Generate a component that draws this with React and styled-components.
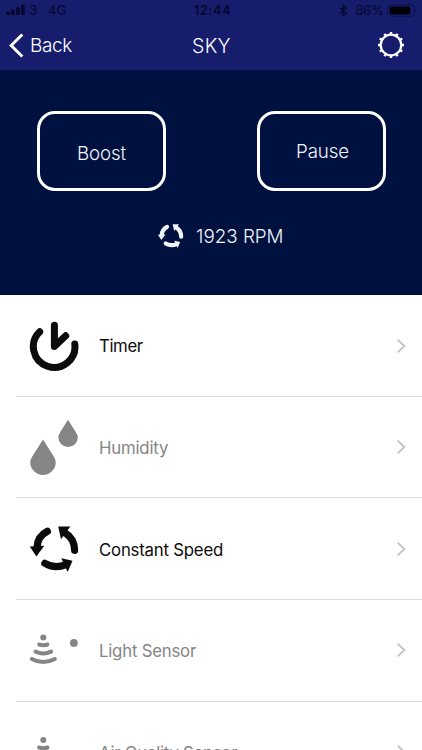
import styled, { createGlobalStyle } from "styled-components";

const GlobalStyle = createGlobalStyle`
  * {
    box-sizing: border-box;
  }
  body {
    margin: 0;
    overflow: hidden;
    background: #fff;
    font-family: Inter, "Liberation Sans", sans-serif;
  }
  svg {
    display: block;
    flex-shrink: 0;
  }
`;

const StyledApp = styled.div`
  width: 422px;
  height: 750px;
  overflow: hidden;
  background: #fff;
`;

const StyledHeader = styled.header`
  height: 70px;
  background: #161d6d;
`;

const StatusBar = styled.div`
  display: grid;
  grid-template-columns: 1fr auto 1fr;
  align-items: center;
  height: 20px;
  padding: 0 5px 0 6px;
  color: #05082e;
  font-size: 13px;
  line-height: 20px;

  .status__side {
    display: flex;
    align-items: center;
  }
  .status__side--right {
    justify-content: flex-end;
  }
  .status__carrier {
    margin: 0 11px 0 4px;
  }
  .status__time {
    padding-left: 2px;
    font-weight: 600;
    letter-spacing: 0.45px;
  }
  .status__percent {
    margin: 0 3px 0 7px;
    letter-spacing: -0.1px;
  }
`;

const NavBar = styled.nav`
  display: grid;
  grid-template-columns: 1fr auto 1fr;
  align-items: center;
  height: 50px;
  padding: 0 17px 0 9px;
  color: #fff;

  h1 {
    margin: 0 0 0 9px;
    padding-top: 1px;
    font-size: 19.5px;
    font-weight: 300;
    letter-spacing: 0.3px;
  }
`;

const NavButton = styled.button`
  display: flex;
  align-items: center;
  justify-self: ${({ $end }) => ($end ? "end" : "start")};
  gap: 6px;
  padding: ${({ $end }) => ($end ? 0 : 1)}px 0 0;
  border: 0;
  background: none;
  color: inherit;
  font: 300 19px Inter, sans-serif;
  letter-spacing: -0.35px;
`;

const StyledPanel = styled.section`
  height: 225px;
  padding: 41px 36.5px 0;
  background: #00113f;
  color: #fff;

  .panel__buttons {
    display: flex;
    justify-content: space-between;
  }
`;

const PanelButton = styled.button`
  width: 129px;
  height: 80px;
  padding: ${({ $drop }) => $drop}px 0 0 ${({ $shift }) => $shift}px;
  border: 3px solid #fff;
  border-radius: 18px;
  background: none;
  color: #f1f4fb;
  font: 300 18.7px Inter, sans-serif;
  letter-spacing: -0.1px;
`;

const Rpm = styled.div`
  display: flex;
  align-items: center;
  height: 28px;
  margin: 31px 0 0 120.5px;
  gap: 12px;
  color: #f1f4fb;
  font-size: 18.8px;
  font-weight: 300;
  letter-spacing: 0;
`;

const StyledList = styled.ul`
  margin: 0;
  padding: 0.3px 0 0 16px;
  list-style: none;
`;

const StyledRow = styled.li`
  display: flex;
  align-items: center;
  height: 101.6px;
  padding: 0 16px 0 12px;
  border-bottom: 1px solid #dcdcde;
  color: ${({ $muted }) => ($muted ? "#858585" : "#0b0b0b")};

  .row__label {
    flex-grow: 1;
    margin-left: 19px;
    padding-top: 1.5px;
    font-size: 16.8px;
    letter-spacing: ${({ $spacing }) => $spacing}px;
  }
`;

const SignalIcon = () => (
  <svg width="19" height="12" viewBox="0 0 19 12" fill="currentColor">
    <rect x="0" y="7.5" width="3.8" height="3.5" rx="1" />
    <rect x="5" y="5.5" width="3.8" height="5.5" rx="1" />
    <rect x="10" y="3.2" width="3.8" height="7.8" rx="1" />
    <rect x="15" y="0.5" width="3.8" height="10.5" rx="1" />
  </svg>
);

const BluetoothIcon = () => (
  <svg
    width="9"
    height="13"
    viewBox="0 0 9 13"
    fill="none"
    stroke="currentColor"
    strokeWidth="1.3"
  >
    <path d="M1 3.7 7.4 9 4.3 11.8V1.2L7.4 4 1 9.3" />
  </svg>
);

const BatteryIcon = () => (
  <svg width="30" height="13" viewBox="0 0 30 13">
    <rect
      x="0.7"
      y="0.7"
      width="26.5"
      height="11.6"
      rx="3"
      fill="none"
      stroke="#0d1252"
    />
    <rect x="2.7" y="2.5" width="20.5" height="8" rx="1" fill="#000005" />
    <path d="M28.4 4.5q1.4 2 0 4z" fill="#0d1252" />
  </svg>
);

const BackIcon = () => (
  <svg
    width="15"
    height="25"
    viewBox="0 0 15 25"
    fill="none"
    stroke="currentColor"
    strokeWidth="3"
  >
    <path d="M13.3 1.5 2.2 12.5l11.1 11" />
  </svg>
);

const GearIcon = () => (
  <svg
    width="28"
    height="28"
    viewBox="-14 -14 28 28"
    fill="none"
    stroke="currentColor"
  >
    <circle r="10.3" strokeWidth="2.3" />
    {[...Array(12).keys()].map((i) => (
      <path
        key={i}
        d="M0-10.5V-13"
        strokeWidth="2.4"
        transform={`rotate(${i * 30})`}
      />
    ))}
  </svg>
);

const TimerIcon = () => (
  <svg
    width="52"
    height="60"
    viewBox="28 315.5 52 60"
    fill="none"
    stroke="currentColor"
    strokeWidth="7"
    strokeLinecap="round"
    strokeLinejoin="round"
  >
    <path d="M39.7 331.2A20.8 20.8 0 1 0 74.8 343.5" />
    <path d="M54.4 324.7v21.3l11.3-10.7" />
  </svg>
);

const HumidityIcon = () => (
  <svg width="52" height="60" viewBox="28 417.5 52 60" fill="currentColor">
    <path d="M43 440L33.2 455.5C31.4 458.3 30.3 460.4 30.3 463a12.7 12.4 0 0 0 25.4 0C55.7 460.4 54.6 458.3 52.8 455.5z" />
    <path d="M68 420.3L60.3 432.5C59.2 434.4 58.4 436 58.4 438a9.7 9.4 0 0 0 19.4 0C77.8 436 76.8 434.4 75.7 432.5z" />
  </svg>
);

const SpeedIcon = ({
  width = 52,
  height = 60,
  viewBox = "28 519 52 60",
  strokeWidth = 7.2,
}) => (
  <svg width={width} height={height} viewBox={viewBox} fill="currentColor">
    <g
      fill="none"
      stroke="currentColor"
      strokeWidth={strokeWidth}
      strokeLinecap="round"
    >
      <path d="M47.4 531.3Q37.5 536.5 37.1 547" />
      <path d="M74.6 550.3Q74.4 538 65 532.8" />
      <path d="M44.8 563.3Q54.5 569.3 66 564.6" />
    </g>
    <path d="M29.8 546.5 44.3 545.8 36.4 556.5z" />
    <path d="M58.2 526.5 70.3 526.5 61 539.3z" />
    <path d="M61.3 558.2 72.5 560.7 67.7 572z" />
  </svg>
);

const LightSensorIcon = () => (
  <svg
    width="52"
    height="60"
    viewBox="28 621 52 60"
    fill="none"
    stroke="currentColor"
    strokeWidth="4"
    strokeLinecap="round"
  >
    <circle cx="43.3" cy="638.6" r="3" fill="currentColor" stroke="none" />
    <circle cx="73.9" cy="643.9" r="3.9" fill="currentColor" stroke="none" />
    <path d="M39.2 645.5q4.1 1.4 8.2 0" />
    <path d="M35.5 652.6q7.8 3.8 15.6 0" />
    <path d="M31.8 660q11.5 6.2 23 0" />
  </svg>
);

const AirSensorIcon = () => (
  <svg
    width="52"
    height="60"
    viewBox="28 620.5 52 60"
    fill="none"
    stroke="currentColor"
    strokeWidth="4"
    strokeLinecap="round"
  >
    <circle cx="43.3" cy="638.6" r="3" fill="currentColor" stroke="none" />
    <path d="M39.2 646q4.1 1.4 8.2 0" />
    <path d="M35.5 653.1q7.8 3.8 15.6 0" />
    <path d="M31.8 660.5q11.5 6.2 23 0" />
  </svg>
);

const ChevronIcon = () => (
  <svg width="10" height="16" viewBox="0 0 10 16" fill="none">
    <path d="M1.7 1.6 8.3 8l-6.6 6.4" stroke="#c5c5c9" strokeWidth="2" />
  </svg>
);

const rows = [
  { label: "Timer", Icon: TimerIcon, spacing: -0.4 },
  { label: "Humidity", Icon: HumidityIcon, spacing: -0.2, muted: true },
  { label: "Constant Speed", Icon: SpeedIcon, spacing: -0.22 },
  { label: "Light Sensor", Icon: LightSensorIcon, spacing: -0.22, muted: true },
  {
    label: "Air Quality Sensor",
    Icon: AirSensorIcon,
    spacing: -0.25,
    muted: true,
  },
];

const Header = () => {
  return (
    <StyledHeader>
      <StatusBar>
        <div className="status__side">
          <SignalIcon />
          <span className="status__carrier">3</span>
          <span>4G</span>
        </div>
        <span className="status__time">12:44</span>
        <div className="status__side status__side--right">
          <BluetoothIcon />
          <span className="status__percent">86%</span>
          <BatteryIcon />
        </div>
      </StatusBar>
      <NavBar>
        <NavButton>
          <BackIcon />
          Back
        </NavButton>
        <h1>SKY</h1>
        <NavButton $end aria-label="Settings">
          <GearIcon />
        </NavButton>
      </NavBar>
    </StyledHeader>
  );
};

const App = () => {
  return (
    <>
      <GlobalStyle />
      <StyledApp>
        <Header />
        <StyledPanel>
          <div className="panel__buttons">
            <PanelButton $drop={5} $shift={1}>
              Boost
            </PanelButton>
            <PanelButton $drop={1} $shift={3}>
              Pause
            </PanelButton>
          </div>
          <Rpm>
            <SpeedIcon
              width={27}
              height={26}
              viewBox="28 524 52 50"
              strokeWidth={8}
            />
            1923 RPM
          </Rpm>
        </StyledPanel>
        <StyledList>
          {rows.map(({ label, Icon, spacing, muted }) => (
            <StyledRow key={label} $muted={muted} $spacing={spacing}>
              <Icon />
              <span className="row__label">{label}</span>
              <ChevronIcon />
            </StyledRow>
          ))}
        </StyledList>
      </StyledApp>
    </>
  );
};

export default App;
